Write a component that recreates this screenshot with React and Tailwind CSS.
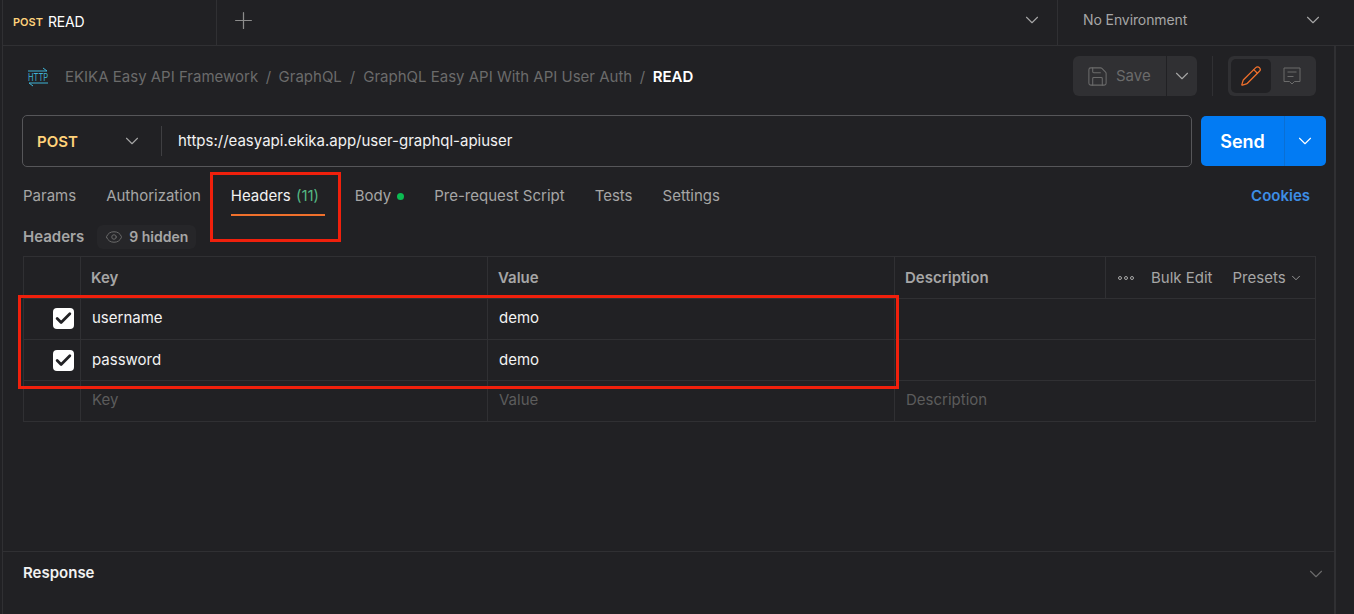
import { Check, ChevronDown, Eye, Pencil, Plus, Save } from "lucide-react";

const tabs = ["Params", "Authorization"];
const rows = [
  { key: "username", value: "demo" },
  { key: "password", value: "demo" },
];

function HttpIcon() {
  return (
    <svg width="22" height="20" viewBox="0 0 22 20" fill="none" className="shrink-0 overflow-visible">
      <path d="M1 4h19M16 1l4 3" stroke="#3fb4d6" strokeWidth="1" />
      <path d="M2 16h19M6 19l-4-3" stroke="#3fb4d6" strokeWidth="1" />
      <text x="1" y="14" fontSize="10.5" fill="#3fb4d6" fontFamily="Inter, sans-serif" textLength="20" lengthAdjust="spacingAndGlyphs">
        HTTP
      </text>
    </svg>
  );
}

function CommentIcon() {
  return (
    <svg width="18" height="18" viewBox="0 0 18 18" fill="none" stroke="#6b6b6b" strokeWidth="1" className="ml-[12px] shrink-0">
      <path d="M1 1h16v13.5h-5.5L9 17l-2.5-2.5H1z" strokeLinejoin="round" />
      <path d="M4.5 5h9M4.5 9.5h6" />
    </svg>
  );
}

export default function App() {
  return (
    <div className="relative flex h-[614px] w-[1354px] overflow-hidden bg-[#212124] font-['Inter',sans-serif] text-[15px] leading-5 text-[#a6a6a6]">
      <div className="flex w-[1354px] flex-col pl-[3px]">
        {/* top tab strip */}
        <div className="-ml-px flex h-[46px] shrink-0 border-b border-l border-[#303033]">
          <div className="flex w-[214px] shrink-0 items-center gap-[5px] border-r border-[#303033] pb-[2px] pl-[10px]">
            <span className="text-[11px] font-semibold text-[#ffd27a]">POST</span>
            <span className="text-[14px] tracking-[-0.2px] text-white">READ</span>
          </div>
          <div className="flex w-[840px] shrink-0 items-center justify-between pb-[5px] pl-[13px] pr-[14px]">
            <Plus size={27} strokeWidth={1.1} className="text-[#8c8c8c]" />
            <ChevronDown size={22} strokeWidth={1.2} className="text-[#a6a6a6]" />
          </div>
          <div className="flex w-[296px] shrink-0 items-center justify-between border-l border-[#303033] pb-[5px] pl-[25px] pr-[29px]">
            <span className="text-[14px] tracking-[-0.1px]">No Environment</span>
            <ChevronDown size={22} strokeWidth={1.2} className="text-[#a6a6a6]" />
          </div>
        </div>

        <div className="flex min-h-0 flex-1">
          <div className="-ml-px flex w-[1334px] flex-col border-l border-r-[2px] border-[#303033]">
            {/* breadcrumb row */}
            <div className="flex h-[50px] shrink-0 items-center justify-between pl-[24px] pr-[18px] pt-[10px]">
              <div className="flex items-center pt-[1px] text-[#6b6b6b]">
                <HttpIcon />
                <span className="ml-[16px]">EKIKA Easy API Framework</span>
                <span className="mx-[7.5px]">/</span>
                <span>GraphQL</span>
                <span className="mx-[8px]">/</span>
                <span>GraphQL Easy API With API User Auth</span>
                <span className="mx-[7.5px]">/</span>
                <span className="font-semibold text-white">READ</span>
              </div>
              <div className="flex items-center">
                <div className="flex h-[40px] w-[93px] items-center gap-[7px] rounded-l-[6px] bg-[#303033] pl-[13px] text-[#6b6b6b]">
                  <Save size={23} strokeWidth={1.1} />
                  <span>Save</span>
                </div>
                <div className="ml-px flex h-[40px] w-[30px] items-center justify-center rounded-r-[6px] bg-[#303033]">
                  <ChevronDown size={22} strokeWidth={1.2} className="text-[#a6a6a6]" />
                </div>
                <div className="mx-[15px] h-[40px] w-px bg-[#303033]" />
                <div className="flex h-[40px] w-[88px] items-center rounded-[6px] bg-[#303033] pl-[3px]">
                  <div className="flex h-[34px] w-[40px] items-center justify-center rounded-[5px] bg-[#212124]">
                    <Pencil size={22} strokeWidth={1.4} className="text-[#f0702c]" />
                  </div>
                  <CommentIcon />
                </div>
              </div>
            </div>

            {/* url bar */}
            <div className="mt-[19px] flex shrink-0 pl-[19px]">
              <div className="flex h-[52px] w-[1170px] items-center rounded-[5px] border border-[#565659]">
                <span className="ml-[14px] w-[84px] pt-[1px] font-semibold text-[#ffd27a]">POST</span>
                <ChevronDown size={22} strokeWidth={1.2} className="text-[#a6a6a6]" />
                <div className="ml-[18px] h-[30px] w-px bg-[#3f3f42]" />
                <span className="ml-[16px] text-[#f2f2f2]">https://easyapi.ekika.app/user-graphql-apiuser</span>
              </div>
              <div className="ml-[9px] mt-px flex h-[50px] w-[125px] items-center rounded-[5px] bg-[#027bf3] text-white">
                <span className="h-[50px] w-[84px] border-r border-[#0a6fd4] pt-[1px] text-center text-[18px] leading-[50px] font-semibold">Send</span>
                <ChevronDown size={22} strokeWidth={1.2} className="ml-[9px]" />
              </div>
            </div>

            {/* request tabs */}
            <div className="flex h-[49px] shrink-0 items-start justify-between pl-[20px] pr-[24px] pt-[19px]">
              <div className="flex">
                {tabs.map((tab) => (
                  <span key={tab} className="mr-[30px]">
                    {tab}
                  </span>
                ))}
                <div className="flex h-[30px] w-[94px] flex-col">
                  <span className="text-[#f2f2f2]">
                    Headers <span className="ml-[1px] text-[#55b683]">(11)</span>
                  </span>
                  <div className="mt-auto h-[2px] bg-[#f0702c]" />
                </div>
                <span className="ml-[30px] flex h-5 items-center">
                  Body
                  <span className="ml-[6px] h-[7px] w-[7px] rounded-full bg-[#0cbb52]" />
                </span>
                <span className="ml-[30px]">Pre-request Script</span>
                <span className="ml-[30px]">Tests</span>
                <span className="ml-[30px]">Settings</span>
              </div>
              <span className="font-semibold text-[#3d8ee6]">Cookies</span>
            </div>

            {/* headers meta */}
            <div className="flex h-[40px] shrink-0 items-center pl-[20px] pt-[1px]">
              <span className="font-semibold">Headers</span>
              <div className="ml-[13px] flex h-[24px] items-center gap-[6px] rounded-[6px] bg-[#262629] px-[8px] text-[14px] font-semibold">
                <Eye size={18} strokeWidth={1.3} className="text-[#6b6b6b]" />
                <span>9 hidden</span>
              </div>
            </div>

            {/* headers table */}
            <div className="ml-[20px] w-[1293px] shrink-0 border border-[#303033]">
              <div className="flex h-[42px] border-b border-[#303033]">
                <div className="w-[57px] border-r border-[#303033]" />
                <div className="flex w-[407px] items-center border-r border-[#303033] pl-[10px] font-semibold">Key</div>
                <div className="flex w-[407px] items-center border-r border-[#303033] pl-[10px] font-semibold">Value</div>
                <div className="flex w-[211px] items-center border-r border-[#303033] pl-[10px] font-semibold">Description</div>
                <div className="flex flex-1 items-center pl-[12px]">
                  <span className="flex gap-[2px]">
                    <i className="h-[4px] w-[4px] rounded-full border border-[#a6a6a6]" />
                    <i className="h-[4px] w-[4px] rounded-full border border-[#a6a6a6]" />
                    <i className="h-[4px] w-[4px] rounded-full border border-[#a6a6a6]" />
                  </span>
                  <span className="ml-[17px]">Bulk Edit</span>
                  <span className="ml-[20px]">Presets</span>
                  <ChevronDown size={14} strokeWidth={1.5} className="ml-[3px]" />
                </div>
              </div>
              {rows.map((row, i) => (
                <div key={row.key} className="flex h-[41px] border-b border-[#303033] text-[#f2f2f2]">
                  <div className={`flex w-[57px] items-center justify-end border-r border-[#303033] pr-[6px] ${i === 0 ? "pb-[1px]" : ""}`}>
                    <div className="flex h-[21px] w-[21px] items-center justify-center rounded-[4px] bg-white">
                      <Check size={19} strokeWidth={3.5} className="text-[#212124]" />
                    </div>
                  </div>
                  <div className={`flex w-[407px] items-center border-r border-[#303033] pl-[11px] ${i === 0 ? "pb-[2px]" : ""}`}>{row.key}</div>
                  <div className={`flex w-[407px] items-center border-r border-[#303033] pl-[11px] ${i === 0 ? "pb-[2px]" : ""}`}>{row.value}</div>
                </div>
              ))}
              <div className="flex h-[40px] text-[#5c5c5c]">
                <div className="w-[57px] border-r border-[#303033]" />
                <div className="flex w-[407px] items-center border-r border-[#303033] pb-[2px] pl-[11px]">Key</div>
                <div className="flex w-[407px] items-center border-r border-[#303033] pb-[2px] pl-[11px]">Value</div>
                <div className="flex items-center pb-[2px] pl-[11px]">Description</div>
              </div>
            </div>

            {/* response */}
            <div className="mt-auto flex h-[63px] shrink-0 items-start justify-between border-t border-[#303033] pl-[20px] pr-[7px] pt-[11px]">
              <span className="font-semibold text-[#f2f2f2]">Response</span>
              <ChevronDown size={22} strokeWidth={1.2} className="text-[#6b6b6b]" />
            </div>
          </div>
        </div>
      </div>

      {/* red annotation boxes drawn on top of the screenshot */}
      <div className="absolute left-[210px] top-[172px] h-[70px] w-[131px] border-[3px] border-[#f0200c]" />
      <div className="absolute left-[18px] top-[295px] h-[94px] w-[881px] border-[3px] border-[#f0200c]" />
    </div>
  );
}
